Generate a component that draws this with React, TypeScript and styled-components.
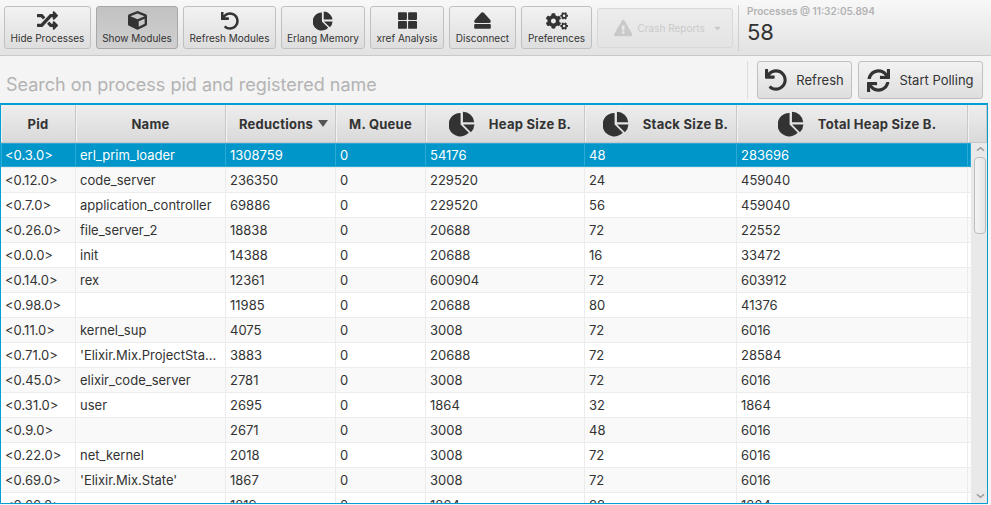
import React from 'react'
import styled, { createGlobalStyle } from 'styled-components'
import { FaRandom, FaCube, FaUndo, FaThLarge, FaEject, FaCogs, FaExclamationTriangle, FaSync, FaCaretDown } from 'react-icons/fa'

const GlobalStyle = createGlobalStyle`
  html, body {
    margin: 0;
    padding: 0;
    background: #f4f4f4;
    font-family: Inter, "Liberation Sans", sans-serif;
  }
  * {
    box-sizing: border-box;
  }
`

const PieIcon: React.FC<{ size: number }> = ({ size }) => (
  <svg width={size} height={size} viewBox="0 0 28 28" fill="#333">
    <path d="M12.5 2.2 V14.6 L21.3 23.4 A12.6 12.6 0 1 1 12.5 2.2 Z" />
    <path d="M15 0.8 A12.4 12.4 0 0 1 27.2 12 H15 Z" />
    <path d="M15.2 14.6 H27.4 A12.4 12.4 0 0 1 23.6 22.9 Z" />
  </svg>
)

const tools = [
  { label: 'Hide Processes', icon: <FaRandom size={21} />, width: 87 },
  { label: 'Show Modules', icon: <FaCube size={19} />, width: 82, active: true },
  { label: 'Refresh Modules', icon: <FaUndo size={18} />, width: 93 },
  { label: 'Erlang Memory', icon: <PieIcon size={20} />, width: 84 },
  { label: 'xref Analysis', icon: <FaThLarge size={19} />, width: 74 },
  { label: 'Disconnect', icon: <FaEject size={19} />, width: 67 },
  { label: 'Preferences', icon: <FaCogs size={22} />, width: 71 },
]

const columns = [
  { label: 'Pid' },
  { label: 'Name' },
  { label: 'Reductions', sorted: true },
  { label: 'M. Queue' },
  { label: 'Heap Size B.', pie: true },
  { label: 'Stack Size B.', pie: true },
  { label: 'Total Heap Size B.', pie: true },
]

const rows = [
  ['<0.3.0>', 'erl_prim_loader', '1308759', '0', '54176', '48', '283696'],
  ['<0.12.0>', 'code_server', '236350', '0', '229520', '24', '459040'],
  ['<0.7.0>', 'application_controller', '69886', '0', '229520', '56', '459040'],
  ['<0.26.0>', 'file_server_2', '18838', '0', '20688', '72', '22552'],
  ['<0.0.0>', 'init', '14388', '0', '20688', '16', '33472'],
  ['<0.14.0>', 'rex', '12361', '0', '600904', '72', '603912'],
  ['<0.98.0>', '', '11985', '0', '20688', '80', '41376'],
  ['<0.11.0>', 'kernel_sup', '4075', '0', '3008', '72', '6016'],
  ['<0.71.0>', "'Elixir.Mix.ProjectSta...", '3883', '0', '20688', '72', '28584'],
  ['<0.45.0>', 'elixir_code_server', '2781', '0', '3008', '72', '6016'],
  ['<0.31.0>', 'user', '2695', '0', '1864', '32', '1864'],
  ['<0.9.0>', '', '2671', '0', '3008', '48', '6016'],
  ['<0.22.0>', 'net_kernel', '2018', '0', '3008', '72', '6016'],
  ['<0.69.0>', "'Elixir.Mix.State'", '1867', '0', '3008', '72', '6016'],
  ['<0.66.0>', '', '1819', '0', '1864', '88', '1864'],
]

const App: React.FC = () => {
  return (
    <Page>
      <GlobalStyle />
      <Toolbar>
        {tools.map((tool) => (
          <ToolButton key={tool.label} $width={tool.width} $active={tool.active}>
            <ToolIcon>{tool.icon}</ToolIcon>
            {tool.label}
          </ToolButton>
        ))}
        <CrashButton>
          <FaExclamationTriangle size={20} />
          <span>Crash Reports</span>
          <FaCaretDown size={10} />
        </CrashButton>
        <ToolSeparator />
        <Counter>
          <CounterLabel>Processes @ 11:32:05.894</CounterLabel>
          <CounterValue>58</CounterValue>
        </Counter>
      </Toolbar>
      <SearchRow>
        <SearchText>Search on process pid and registered name</SearchText>
        <RowSeparator />
        <ActionButton $width={95}>
          <FaUndo size={22} />
          Refresh
        </ActionButton>
        <ActionButton $width={125}>
          <FaSync size={23} />
          Start Polling
        </ActionButton>
      </SearchRow>
      <Table>
        <HeaderRow>
          {columns.map((col) => (
            <HeaderCell key={col.label} $pie={col.pie} $sorted={col.sorted}>
              {col.pie && <PieIcon size={26} />}
              <span>{col.label}</span>
              {col.sorted && <SortArrow />}
            </HeaderCell>
          ))}
          <HeaderCell />
        </HeaderRow>
        <Body>
          <Rows>
            {rows.map((row, i) => (
              <Row key={row[0]} $odd={i % 2 === 1} $selected={i === 0}>
                {row.map((value, j) => (
                  <Cell key={j} $selected={i === 0}>{value}</Cell>
                ))}
              </Row>
            ))}
          </Rows>
          <ScrollBar>
            <ScrollArrow viewBox="0 0 10 6">
              <path d="M1 5 L5 1.5 L9 5" />
            </ScrollArrow>
            <ScrollThumb />
            <ScrollArrow viewBox="0 0 10 6" $bottom>
              <path d="M1 1 L5 4.5 L9 1" />
            </ScrollArrow>
          </ScrollBar>
        </Body>
      </Table>
    </Page>
  )
}

const GRID = '75px 150px 110px 90px 159px 152px 231px'

const Page = styled.div`
  width: 991px;
  height: 505px;
  overflow: hidden;
  display: flex;
  flex-direction: column;
  background: #f4f4f4;
  color: #333;
`

const Toolbar = styled.div`
  height: 56px;
  flex: none;
  display: flex;
  align-items: flex-start;
  gap: 5px;
  padding: 6px 4px 0;
  background: linear-gradient(#f8f8f8, #e2e2e2);
  border-bottom: 1px solid #c9c9c9;
`

const ToolButton = styled.div<{ $width: number; $active?: boolean }>`
  width: ${(p) => p.$width}px;
  height: 43px;
  flex: none;
  display: flex;
  flex-direction: column;
  align-items: center;
  justify-content: flex-end;
  padding-bottom: 3px;
  border: 1px solid ${(p) => (p.$active ? '#a8a8a8' : '#c0c0c0')};
  border-radius: 3px;
  background: ${(p) => (p.$active ? 'linear-gradient(#c2c2c2, #d0d0d0)' : 'linear-gradient(#f2f2f2, #dedede)')};
  font-size: 10px;
  line-height: 13px;
  white-space: nowrap;
  color: #333;
`

const ToolIcon = styled.div`
  height: 23px;
  display: flex;
  align-items: center;
  color: #333;
`

const CrashButton = styled.div`
  width: 136px;
  height: 40px;
  margin-top: 2px;
  flex: none;
  display: flex;
  align-items: center;
  padding: 0 10px 0 16px;
  gap: 5px;
  border: 1px solid #d8d8d8;
  border-radius: 3px;
  background: linear-gradient(#ececec, #e4e4e4);
  color: #c9c9c9;
  font-size: 10px;
  white-space: nowrap;
  span {
    margin-right: 3px;
  }
`

const ToolSeparator = styled.div`
  width: 1px;
  height: 46px;
  flex: none;
  background: #cfcfcf;
  margin-top: -1px;
`

const Counter = styled.div`
  margin-left: 3px;
  margin-top: -2px;
`

const CounterLabel = styled.div`
  font-size: 10px;
  line-height: 14px;
  font-weight: 600;
  color: #b2b2b2;
`

const CounterValue = styled.div`
  font-size: 22px;
  line-height: 26px;
  margin-top: 1px;
  color: #333;
`

const SearchRow = styled.div`
  height: 47px;
  flex: none;
  display: flex;
  align-items: flex-start;
  padding: 5px 8px 0 6px;
  gap: 6px;
  background: #f4f4f4;
`

const SearchText = styled.div`
  flex: 1;
  font-size: 18px;
  line-height: 26px;
  margin-top: 11px;
  color: #b3b3b3;
`

const RowSeparator = styled.div`
  width: 1px;
  height: 38px;
  background: #dcdcdc;
  margin-right: 3px;
`

const ActionButton = styled.div<{ $width: number }>`
  width: ${(p) => p.$width}px;
  height: 38px;
  flex: none;
  display: flex;
  align-items: center;
  justify-content: center;
  gap: 9px;
  border: 1px solid #c0c0c0;
  border-radius: 3px;
  background: linear-gradient(#f2f2f2, #dedede);
  font-size: 13px;
  color: #333;
`

const Table = styled.div`
  width: 988px;
  height: 401px;
  flex: none;
  display: flex;
  flex-direction: column;
  border: 1px solid #039ed3;
  border-top-width: 2px;
  background: #fff;
  overflow: hidden;
`

const HeaderRow = styled.div`
  height: 38px;
  flex: none;
  display: grid;
  grid-template-columns: ${GRID} 1fr;
  background: linear-gradient(#eeeeee, #d9d9d9);
  border-bottom: 1px solid #c8c8c8;
`

const HeaderCell = styled.div<{ $pie?: boolean; $sorted?: boolean }>`
  display: flex;
  align-items: center;
  justify-content: center;
  gap: ${(p) => (p.$pie ? '14px' : '5px')};
  padding-left: ${(p) => (p.$pie ? '10px' : p.$sorted ? '6px' : '0')};
  border-right: 1px solid #c8c8c8;
  box-shadow: inset 1px 0 0 #f2f2f2;
  font-size: 13px;
  letter-spacing: 0.25px;
  font-weight: 700;
  white-space: nowrap;
  color: #333;
`

const SortArrow = styled.div`
  width: 0;
  height: 0;
  border-left: 5px solid transparent;
  border-right: 5px solid transparent;
  border-top: 7px solid #555;
`

const Body = styled.div`
  flex: 1;
  min-height: 0;
  display: flex;
`

const Rows = styled.div`
  flex: 1;
  min-width: 0;
  overflow: hidden;
`

const Row = styled.div<{ $odd: boolean; $selected: boolean }>`
  height: 25px;
  display: grid;
  grid-template-columns: ${GRID};
  background: ${(p) => (p.$selected ? '#0096c9' : p.$odd ? '#f9f9f9' : '#fff')};
  border-bottom: 1px solid #ececec;
  box-shadow: ${(p) => (p.$selected ? 'inset 0 0 0 1px #2aa8d6' : 'none')};
`

const Cell = styled.div<{ $selected: boolean }>`
  padding-left: 4px;
  border-right: 1px solid ${(p) => (p.$selected ? '#2aa8d6' : '#ececec')};
  font-size: 13px;
  line-height: 24px;
  white-space: nowrap;
  overflow: hidden;
  color: ${(p) => (p.$selected ? '#fff' : '#333')};
`

const ScrollBar = styled.div`
  width: 16px;
  flex: none;
  display: flex;
  flex-direction: column;
  align-items: center;
  padding-left: 2px;
  background: #e9e9e9;
`

const ScrollArrow = styled.svg<{ $bottom?: boolean }>`
  width: 9px;
  height: 6px;
  flex: none;
  margin-top: ${(p) => (p.$bottom ? 'auto' : '3px')};
  margin-bottom: ${(p) => (p.$bottom ? '4px' : '0')};
  path {
    fill: none;
    stroke: #999;
    stroke-width: 1.5;
  }
`

const ScrollThumb = styled.div`
  width: 12px;
  height: 77px;
  margin-top: 5px;
  flex: none;
  border: 1px solid #bdbdbd;
  border-radius: 4px;
  background: linear-gradient(90deg, #f4f4f4, #e6e6e6);
`

export default App
